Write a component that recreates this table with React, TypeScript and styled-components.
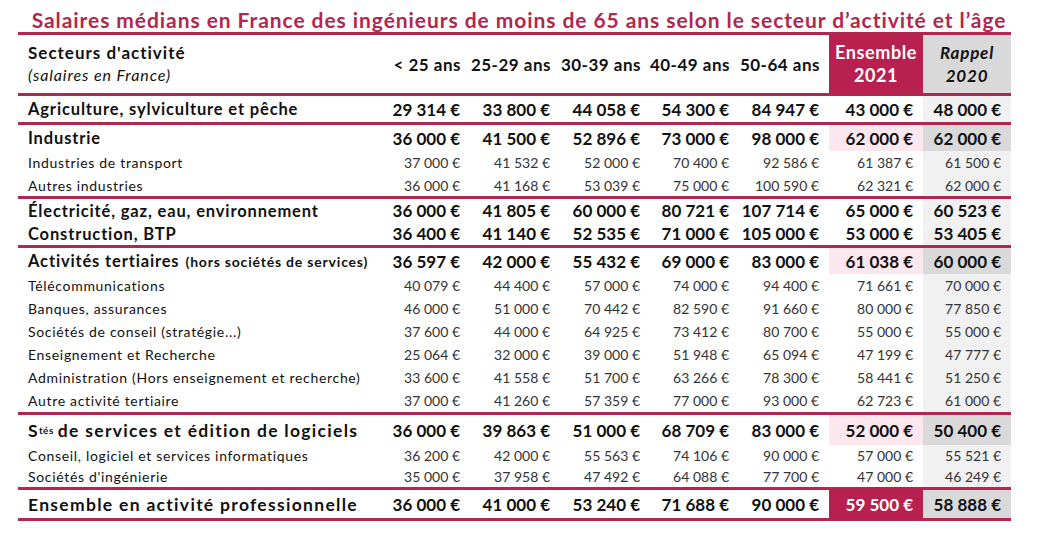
import React from "react";
import styled, { createGlobalStyle } from "styled-components";

const PINK = "#b3264f";
const PINK_DARK = "#b8214f";
const PINK_LIGHT = "#fde7ee";
const GRAY = "#d9d9d9";
const GRAY_LIGHT = "#f1f1f1";

const LABEL_FONT = `"Lato", "Noto Sans", sans-serif`;
const NUM_FONT = `"Lato", "Liberation Sans", sans-serif`;

const GlobalStyle = createGlobalStyle`
  html, body { margin: 0; padding: 0; background: #ffffff; }
  body { width: 1045px; height: 541px; overflow: hidden; }
`;

const Page = styled.div`
  width: 993px;
  margin-left: 18px;
  color: #111;
`;

const Title = styled.h1`
  margin: 0;
  height: 32px;
  box-sizing: border-box;
  padding: 8px 0 0 9px;
  font-family: ${LABEL_FONT};
  font-weight: 700;
  font-size: 21px;
  line-height: 24px;
  letter-spacing: 0.93px;
  text-align: center;
  color: ${PINK};
  white-space: nowrap;
`;

const Table = styled.div`
  border-top: 3px solid ${PINK};
`;

const COLS = "360px 92px 90px 90px 89px 90px 94px 88px";

const HeaderRow = styled.div`
  display: grid;
  grid-template-columns: ${COLS};
  height: 58px;
  border-bottom: 3px solid ${PINK};
`;

const Group = styled.div`
  border-bottom: 3px solid ${PINK};
`;

const Row = styled.div<{ $h: number }>`
  display: grid;
  grid-template-columns: ${COLS};
  height: ${(p) => p.$h}px;
`;

const HeadLabel = styled.div`
  display: flex;
  flex-direction: column;
  justify-content: center;
  padding-left: 10px;
  font-family: ${LABEL_FONT};
  color: #111;
`;

const HeadMain = styled.span`
  font-weight: 700;
  font-size: 17px;
  line-height: 22px;
  letter-spacing: 1px;
`;

const HeadSub = styled.span`
  font-style: italic;
  font-size: 16px;
  line-height: 22px;
  letter-spacing: 0.9px;
`;

const AgeHead = styled.div`
  display: flex;
  align-items: center;
  justify-content: flex-end;
  padding-right: 9px;
  font-family: ${LABEL_FONT};
  font-weight: 700;
  font-size: 17px;
  letter-spacing: 0.5px;
  white-space: nowrap;
`;

const TotalHead = styled.div<{ $kind: "ens" | "rap" }>`
  display: flex;
  flex-direction: column;
  align-items: center;
  justify-content: center;
  font-family: ${LABEL_FONT};
  font-weight: 700;
  font-size: ${(p) => (p.$kind === "ens" ? 18 : 17)}px;
  line-height: 23px;
  letter-spacing: ${(p) => (p.$kind === "ens" ? 0.6 : 0.8)}px;
  font-style: ${(p) => (p.$kind === "rap" ? "italic" : "normal")};
  background: ${(p) => (p.$kind === "ens" ? PINK_DARK : GRAY)};
  color: ${(p) => (p.$kind === "ens" ? "#ffffff" : "#111")};
`;

type Level = "main" | "sub" | "big";

const Label = styled.div<{ $level: Level }>`
  display: flex;
  align-items: center;
  padding-left: 10px;
  font-family: ${LABEL_FONT};
  font-weight: ${(p) => (p.$level === "sub" ? 400 : 700)};
  font-size: ${(p) => (p.$level === "sub" ? 14 : p.$level === "big" ? 17.5 : 16.5)}px;
  letter-spacing: ${(p) => (p.$level === "sub" ? 0.68 : p.$level === "big" ? 1.3 : 0.85)}px;
  color: #111;
  white-space: nowrap;
`;

const Aside = styled.span`
  font-size: 14px;
  margin-left: 6px;
  letter-spacing: 0.8px;
`;

const Sup = styled.sup`
  font-size: 10px;
  vertical-align: 6px;
  line-height: 0;
  margin-right: 4px;
  letter-spacing: 0.5px;
`;

type Tone = "none" | "pinkLight" | "pinkDark" | "gray" | "grayLight";

const toneBg: Record<Tone, string> = {
  none: "transparent",
  pinkLight: PINK_LIGHT,
  pinkDark: PINK_DARK,
  gray: GRAY,
  grayLight: GRAY_LIGHT,
};

const Value = styled.div<{ $bold: boolean; $tone: Tone }>`
  display: flex;
  align-items: center;
  justify-content: flex-end;
  padding-right: 10px;
  font-family: ${NUM_FONT};
  font-weight: ${(p) => (p.$bold ? 700 : 400)};
  font-size: ${(p) => (p.$bold ? 17 : 14)}px;
  color: ${(p) => (p.$tone === "pinkDark" ? "#ffffff" : p.$bold ? "#111" : "#333")};
  background: ${(p) => toneBg[p.$tone]};
  white-space: nowrap;
`;

type RowData = {
  label: React.ReactNode;
  values: string[];
  level: Level;
  h: number;
  ens: Tone;
  rap: Tone;
};

const main = (label: React.ReactNode, values: string, h = 26, hi = false): RowData => ({
  label,
  values: values.split("|"),
  level: "main",
  h,
  ens: hi ? "pinkLight" : "none",
  rap: hi ? "gray" : "grayLight",
});

const sub = (label: string, values: string, h = 23): RowData => ({
  label,
  values: values.split("|"),
  level: "sub",
  h,
  ens: "none",
  rap: "grayLight",
});

const groups: RowData[][] = [
  [main("Agriculture, sylviculture et pêche", "29 314 €|33 800 €|44 058 €|54 300 €|84 947 €|43 000 €|48 000 €")],
  [
    main("Industrie", "36 000 €|41 500 €|52 896 €|73 000 €|98 000 €|62 000 €|62 000 €", 26, true),
    sub("Industries de transport", "37 000 €|41 532 €|52 000 €|70 400 €|92 586 €|61 387 €|61 500 €"),
    sub("Autres industries", "36 000 €|41 168 €|53 039 €|75 000 €|100 590 €|62 321 €|62 000 €", 22),
  ],
  [
    main("Électricité, gaz, eau, environnement", "36 000 €|41 805 €|60 000 €|80 721 €|107 714 €|65 000 €|60 523 €", 23),
    main("Construction, BTP", "36 400 €|41 140 €|52 535 €|71 000 €|105 000 €|53 000 €|53 405 €", 23),
  ],
  [
    main(
      <>
        Activités tertiaires<Aside>(hors sociétés de services)</Aside>
      </>,
      "36 597 €|42 000 €|55 432 €|69 000 €|83 000 €|61 038 €|60 000 €",
      26,
      true
    ),
    sub("Télécommunications", "40 079 €|44 400 €|57 000 €|74 000 €|94 400 €|71 661 €|70 000 €"),
    sub("Banques, assurances", "46 000 €|51 000 €|70 442 €|82 590 €|91 660 €|80 000 €|77 850 €"),
    sub("Sociétés de conseil (stratégie...)", "37 600 €|44 000 €|64 925 €|73 412 €|80 700 €|55 000 €|55 000 €"),
    sub("Enseignement et Recherche", "25 064 €|32 000 €|39 000 €|51 948 €|65 094 €|47 199 €|47 777 €"),
    sub("Administration (Hors enseignement et recherche)", "33 600 €|41 558 €|51 700 €|63 266 €|78 300 €|58 441 €|51 250 €"),
    sub("Autre activité tertiaire", "37 000 €|41 260 €|57 359 €|77 000 €|93 000 €|62 723 €|61 000 €"),
  ],
  [
    {
      ...main(
        <>
          S<Sup>tés</Sup>de services et édition de logiciels
        </>,
        "36 000 €|39 863 €|51 000 €|68 709 €|83 000 €|52 000 €|50 400 €",
        30,
        true
      ),
      level: "big",
    },
    sub("Conseil, logiciel et services informatiques", "36 200 €|42 000 €|55 563 €|74 106 €|90 000 €|57 000 €|55 521 €", 21),
    sub("Sociétés d'ingénierie", "35 000 €|37 958 €|47 492 €|64 088 €|77 700 €|47 000 €|46 249 €", 21),
  ],
  [
    {
      label: "Ensemble en activité professionnelle",
      values: "36 000 €|41 000 €|53 240 €|71 688 €|90 000 €|59 500 €|58 888 €".split("|"),
      level: "big",
      h: 28,
      ens: "pinkDark",
      rap: "gray",
    },
  ],
];

const nb = (s: string) => s.replace(/ /g, "\u00a0");

export default function App() {
  return (
    <>
      <GlobalStyle />
      <Page>
        <Title>
          Salaires médians en France des ingénieurs de moins de 65 ans selon le secteur d’activité et l’âge
        </Title>
        <Table>
          <HeaderRow>
            <HeadLabel>
              <HeadMain>Secteurs d'activité</HeadMain>
              <HeadSub>(salaires en France)</HeadSub>
            </HeadLabel>
            {["< 25 ans", "25-29 ans", "30-39 ans", "40-49 ans", "50-64 ans"].map((a) => (
              <AgeHead key={a}>{nb(a)}</AgeHead>
            ))}
            <TotalHead $kind="ens">
              <span>Ensemble</span>
              <span>2021</span>
            </TotalHead>
            <TotalHead $kind="rap">
              <span>Rappel</span>
              <span>2020</span>
            </TotalHead>
          </HeaderRow>
          {groups.map((g, gi) => (
            <Group key={gi}>
              {g.map((r, ri) => {
                const bold = r.level !== "sub";
                return (
                  <Row key={ri} $h={r.h}>
                    <Label $level={r.level}>{r.label}</Label>
                    {r.values.map((v, vi) => (
                      <Value
                        key={vi}
                        $bold={bold}
                        $tone={vi === 5 ? r.ens : vi === 6 ? r.rap : "none"}
                      >
                        {nb(v)}
                      </Value>
                    ))}
                  </Row>
                );
              })}
            </Group>
          ))}
        </Table>
      </Page>
    </>
  );
}
